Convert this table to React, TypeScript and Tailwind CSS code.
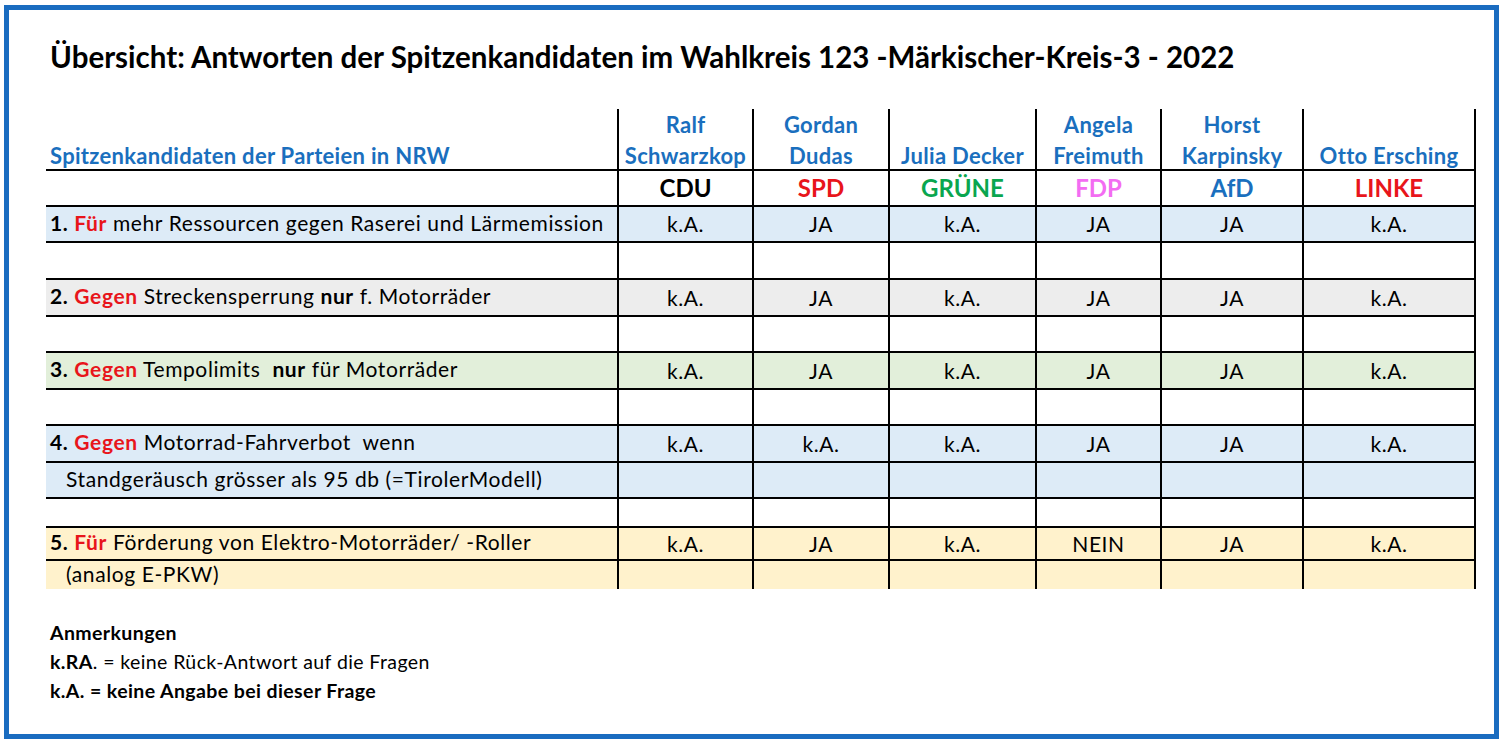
const cols = "grid grid-cols-[571px_135px_136px_147px_125px_142px_174px]";

const candidates = [
  ["Ralf", "Schwarzkop"],
  ["Gordan", "Dudas"],
  ["", "Julia Decker"],
  ["Angela", "Freimuth"],
  ["Horst", "Karpinsky"],
  ["", "Otto Ersching"],
];

const parties = [
  { name: "CDU", color: "text-black" },
  { name: "SPD", color: "text-[#e8151b]" },
  { name: "GRÜNE", color: "text-[#0aa64f]" },
  { name: "FDP", color: "text-[#f36cf2]" },
  { name: "AfD", color: "text-[#1a6fbe]" },
  { name: "LINKE", color: "text-[#e8151b]" },
];

type Row = {
  label?: React.ReactNode;
  values?: string[];
  bg?: string;
  h: string;
  last?: boolean;
};

const Num = ({ n }: { n: string }) => <span className="font-bold">{n}</span>;
const Red = ({ t }: { t: string }) => (
  <span className="font-bold text-[#e8151b]">{t}</span>
);

const rows: Row[] = [
  {
    label: (
      <>
        <Num n="1." /> <Red t="Für" /> mehr Ressourcen gegen Raserei und Lärmemission
      </>
    ),
    values: ["k.A.", "JA", "k.A.", "JA", "JA", "k.A."],
    bg: "bg-[#ddebf7]",
    h: "h-[36px]",
  },
  { h: "h-[37px]" },
  {
    label: (
      <>
        <Num n="2." /> <Red t="Gegen" /> Streckensperrung <b>nur</b> f. Motorräder
      </>
    ),
    values: ["k.A.", "JA", "k.A.", "JA", "JA", "k.A."],
    bg: "bg-[#ededed]",
    h: "h-[37px]",
  },
  { h: "h-[36px]" },
  {
    label: (
      <>
        <Num n="3." /> <Red t="Gegen" /> Tempolimits&nbsp; <b>nur</b> für Motorräder
      </>
    ),
    values: ["k.A.", "JA", "k.A.", "JA", "JA", "k.A."],
    bg: "bg-[#e2efda]",
    h: "h-[37px]",
  },
  { h: "h-[36px]" },
  {
    label: (
      <>
        <Num n="4." /> <Red t="Gegen" /> Motorrad-Fahrverbot&nbsp; wenn
      </>
    ),
    values: ["k.A.", "k.A.", "k.A.", "JA", "JA", "k.A."],
    bg: "bg-[#ddebf7]",
    h: "h-[37px]",
  },
  {
    label: (
      <span className="pl-[16px]">Standgeräusch grösser als 95 db (=TirolerModell)</span>
    ),
    bg: "bg-[#ddebf7]",
    h: "h-[36px]",
  },
  { h: "h-[29px]" },
  {
    label: (
      <>
        <Num n="5." /> <Red t="Für" /> Förderung von Elektro-Motorräder/ -Roller
      </>
    ),
    values: ["k.A.", "JA", "k.A.", "NEIN", "JA", "k.A."],
    bg: "bg-[#fff2cc]",
    h: "h-[33px]",
  },
  {
    label: <span className="pl-[16px]">(analog E-PKW)</span>,
    bg: "bg-[#fff2cc]",
    h: "h-[28px]",
    last: true,
  },
];

export default function App() {
  return (
    <div
      className="h-[745px] w-[1500px] overflow-hidden bg-white pl-[4px] pt-[5px] text-black"
      style={{ fontFamily: "Lato, 'Open Sans', sans-serif" }}
    >
      <div className="h-[734px] w-[1495px] border-[5px] border-[#1a6cc0] pl-[37px] pt-[29px]">
        <h1 className="ml-[4px] text-[29.5px] font-bold leading-[36px]">
          Übersicht: Antworten der Spitzenkandidaten im Wahlkreis 123 -Märkischer-Kreis-3 - 2022
        </h1>

        <div className="mt-[34px] w-[1430px] text-[21px] leading-[24px] tracking-[0.6px]">
          {/* candidate names */}
          <div className={`${cols} h-[62px] border-b-2 border-black`}>
            <div className="flex items-end pb-[2px] pl-[4px] text-[22px] font-bold leading-[31px] tracking-[0.3px] text-[#1a6fbe]">
              <span>Spitzenkandidaten der Parteien in NRW</span>
            </div>
            {candidates.map(([a, b], i) => (
              <div
                key={i}
                className={`flex flex-col items-center justify-end whitespace-nowrap border-l-2 border-black pb-[2px] text-[22px] font-bold leading-[31px] tracking-[0.3px] text-[#1a6fbe] ${
                  i === 5 ? "border-r-2" : ""
                }`}
              >
                {a && <span>{a}</span>}
                <span>{b}</span>
              </div>
            ))}
          </div>

          {/* parties */}
          <div className={`${cols} h-[36px] border-b-2 border-black`}>
            <div />
            {parties.map((p, i) => (
              <div
                key={p.name}
                className={`flex items-center justify-center border-l-2 border-black text-[24px] font-bold tracking-[0px] ${p.color} ${
                  i === 5 ? "border-r-2" : ""
                }`}
              >
                {p.name}
              </div>
            ))}
          </div>

          {rows.map((r, ri) => (
            <div
              key={ri}
              className={`${cols} ${r.h} ${r.bg ?? ""} ${r.last ? "" : "border-b-2 border-black"}`}
            >
              <div className="flex items-center whitespace-nowrap pb-[3px] pl-[4px]">
                <span>{r.label}</span>
              </div>
              {(r.values ?? ["", "", "", "", "", ""]).map((v, i) => (
                <div
                  key={i}
                  className={`flex items-center justify-center border-l-2 border-black ${
                    i === 5 ? "border-r-2" : ""
                  }`}
                >
                  {v}
                </div>
              ))}
            </div>
          ))}
        </div>

        <div className="ml-[4px] mt-[29px] text-[19.5px] leading-[29px] tracking-[0.4px]">
          <div className="font-bold">Anmerkungen</div>
          <div>
            <b>k.RA</b>. = keine Rück-Antwort auf die Fragen
          </div>
          <div className="font-bold">k.A. = keine Angabe bei dieser Frage</div>
        </div>
      </div>
    </div>
  );
}
